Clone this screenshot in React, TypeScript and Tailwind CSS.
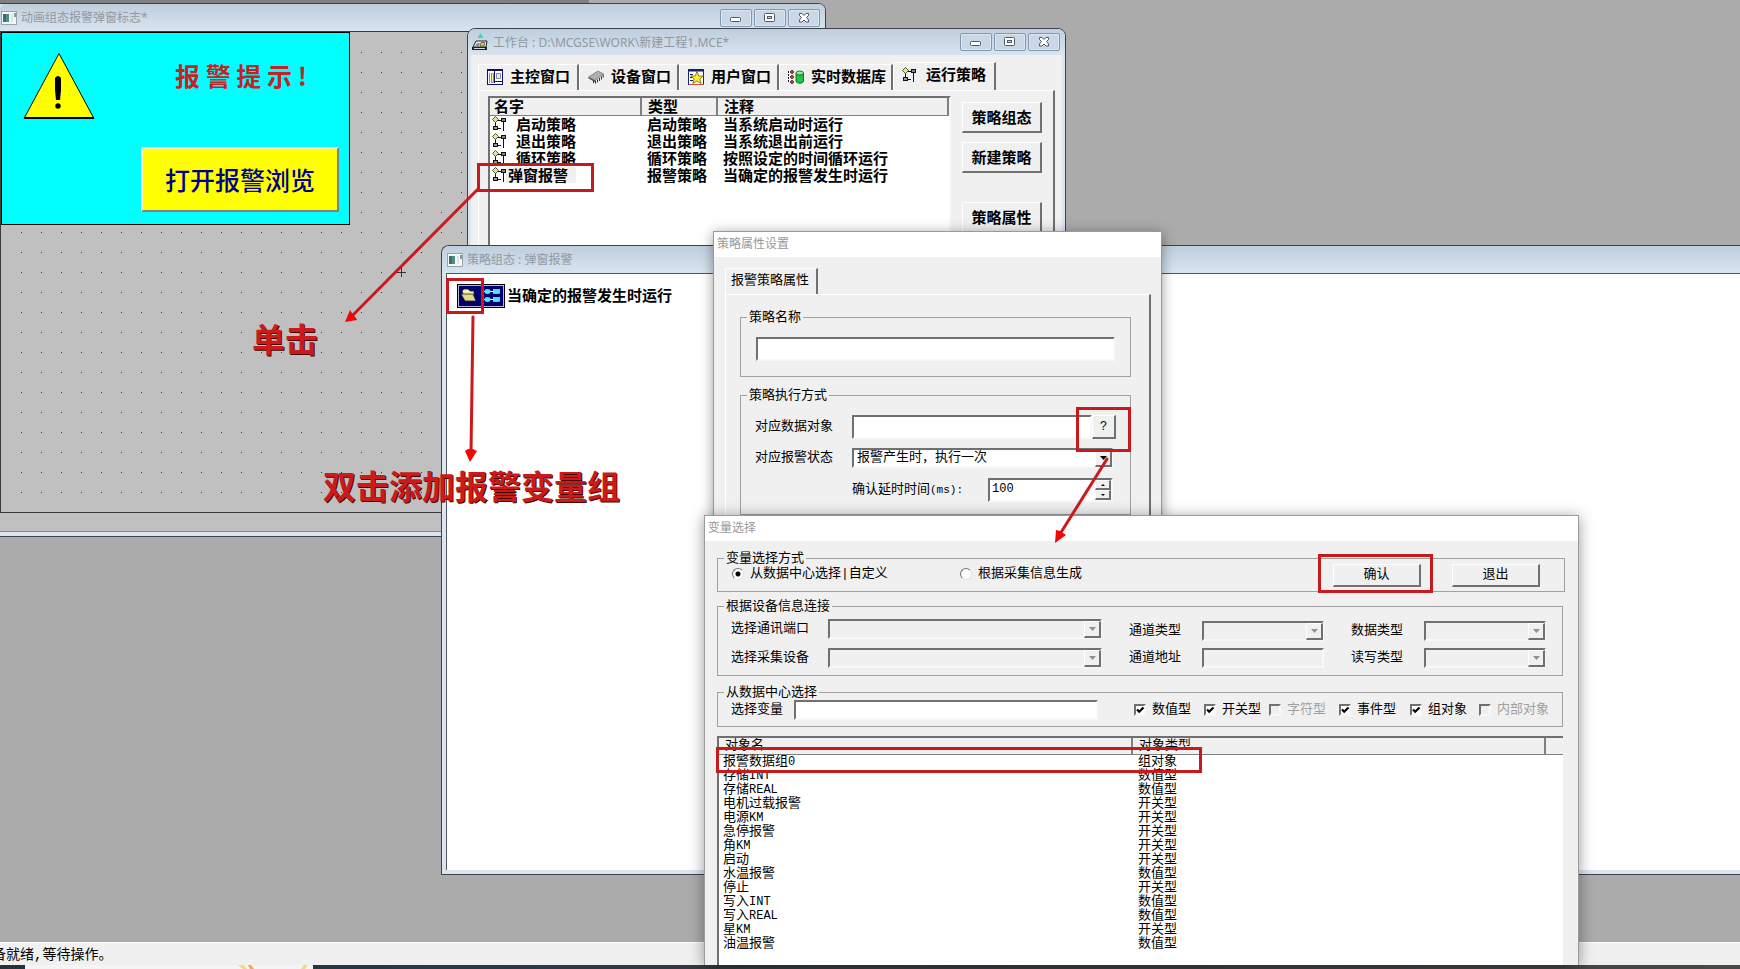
import type { ReactNode } from "react";

/* Classic Win32 bevels, shared by all the dialogs. */
const SUNKEN =
  "border-2 border-t-[#707070] border-l-[#707070] border-r-[#f8f8f8] border-b-[#f8f8f8] outline-none";
const RAISED =
  "border-t border-l border-r-2 border-b-2 border-t-white border-l-white border-r-[#707070] border-b-[#707070] bg-[#f0f0f0]";
const SONG = "font-['Liberation_Mono','Noto_Sans_CJK_SC',sans-serif]";

const STRATEGIES = [
  { name: "启动策略", kind: "启动策略", note: "当系统启动时运行", selected: false },
  { name: "退出策略", kind: "退出策略", note: "当系统退出前运行", selected: false },
  { name: "循环策略", kind: "循环策略", note: "按照设定的时间循环运行", selected: false },
  { name: "弹窗报警", kind: "报警策略", note: "当确定的报警发生时运行", selected: true },
];

const VARIABLES = [
  { name: "报警数据组", suffix: "0", kind: "组对象" },
  { name: "存储", suffix: "INT", kind: "数值型" },
  { name: "存储", suffix: "REAL", kind: "数值型" },
  { name: "电机过载报警", suffix: "", kind: "开关型" },
  { name: "电源", suffix: "KM", kind: "开关型" },
  { name: "急停报警", suffix: "", kind: "开关型" },
  { name: "角", suffix: "KM", kind: "开关型" },
  { name: "启动", suffix: "", kind: "开关型" },
  { name: "水温报警", suffix: "", kind: "数值型" },
  { name: "停止", suffix: "", kind: "开关型" },
  { name: "写入", suffix: "INT", kind: "数值型" },
  { name: "写入", suffix: "REAL", kind: "数值型" },
  { name: "星", suffix: "KM", kind: "开关型" },
  { name: "油温报警", suffix: "", kind: "数值型" },
];

function FormIcon() {
  return (
    <svg width={16} height={14} viewBox="0 0 16 14" className="shrink-0">
      <rect x={0.5} y={0.5} width={15} height={13} fill="#f4f6f8" stroke="#98a2ac" />
      <rect x={2} y={3} width={6} height={8} fill="#4f8f7c" />
      <rect x={2} y={3} width={3} height={8} fill="#3b6f78" />
      <rect x={10} y={3} width={2} height={8} fill="#dfe3e6" />
      <rect x={13} y={2} width={2} height={4} fill="#6fa592" />
    </svg>
  );
}

function WorkbenchIcon() {
  return (
    <svg width={17} height={18} viewBox="0 0 17 18" className="shrink-0">
      <path d="M8.5 0l3 5h-6z" fill="#3fd6c4" />
      <path d="M4 8h11l-1 6H1z" fill="#f4f4e0" stroke="#222" />
      <path d="M5 10h3l-1 3H3z" fill="#8a90a0" />
      <path d="M9 9.500h4l-1 3.500H8z" fill="#d8cf30" stroke="#333" strokeWidth={0.6} />
      <path d="M0 14h15v3H0z" fill="#222" />
      <path d="M2 15.500h11" stroke="#d8d8d8" />
    </svg>
  );
}

function StrategyIcon() {
  return (
    <svg width={14} height={15} viewBox="0 0 14 15" className="shrink-0">
      <path d="M5 4.500h5M3.500 6v5M5 12.500h4M11.500 6v9" fill="none" stroke="#111" />
      <path d="M3.500 0.500l3 3-3 3-3-3z" fill="#e9e68a" stroke="#4a4a20" strokeWidth={0.9} />
      <rect x={9.5} y={2.5} width={4} height={3} fill="#888" stroke="#111" />
      <rect x={1.5} y={10.5} width={4} height={3} fill="#999" stroke="#111" />
    </svg>
  );
}

function MainWindowIcon() {
  return (
    <svg width={16} height={16} viewBox="0 0 16 16" className="shrink-0">
      <rect x={0.5} y={0.5} width={15} height={15} fill="#fff" stroke="#10106a" />
      <path d="M1 1.500h14" stroke="#10106a" />
      <path d="M2.500 4v10M4.500 4.500h2v9h-2zM9.500 4.500h4v5h-4z" fill="#f3efb0" stroke="#8088c8" />
      <path d="M7.500 2v12M8 12.500h7" stroke="#10106a" />
    </svg>
  );
}

function ChipIcon() {
  return (
    <svg width={16} height={14} viewBox="0 0 16 14" className="shrink-0">
      <path d="M0.500 7L10 1l5.500 3L7 10.500z" fill="#b0b0b0" stroke="#777" strokeWidth={0.8} />
      <path d="M0.500 7L7 10.500v1.500L0.500 8.500z" fill="#555" />
      <path d="M5.500 10v3M7.500 10.500v3M9.500 9.500v3M11.500 8v3M13.500 6.500v3M15.200 4.500v3" stroke="#333" />
    </svg>
  );
}

function UserWindowIcon() {
  return (
    <svg width={16} height={16} viewBox="0 0 16 16" className="shrink-0">
      <rect x={0.5} y={0.5} width={15} height={15} fill="#fff" stroke="#1a237e" />
      <path d="M0 1.500h16" stroke="#10206a" strokeWidth={2} />
      <path d="M1 15.500h15" stroke="#d04a3a" />
      <path d="M2 5.500h3M2 8.500h3M2 11.500h3" stroke="#10206a" />
      <path
        d="M9 2.500l1.800 4.500h4.700l-3.700 3 1.400 4.500L9 12l-4.200 2.500 1.400-4.500-3.700-3h4.700z"
        fill="#ffee22"
        stroke="#5a4a00"
        strokeWidth={0.7}
      />
    </svg>
  );
}

function DatabaseIcon() {
  return (
    <svg width={16} height={16} viewBox="0 0 16 16" className="shrink-0">
      <path d="M0.500 2v12" stroke="#222" strokeDasharray="2 1" />
      <path d="M4 1l2 2-2 2-2-2zM4 6l2 2-2 2-2-2zM4 11l2 2-2 2-2-2z" fill="#b83a4a" stroke="#222" strokeWidth={0.7} />
      <path d="M8 4v8c0 3 7.500 3 7.500 0V4" fill="#25c43a" stroke="#0b4a14" strokeWidth={0.8} />
      <ellipse cx={11.75} cy={4} rx={3.75} ry={2} fill="#8df09a" stroke="#0b4a14" strokeWidth={0.8} />
    </svg>
  );
}

function CaptionButtons() {
  const button =
    "flex h-[18px] w-8 items-center justify-center rounded-xs border border-[#8497b0] bg-[#c9d7e6] shadow-[inset_0_0_0_1px_#dce6f0]";
  return (
    <div className="flex gap-0.5">
      <button type="button" aria-label="最小化" className={button}>
        <svg width={12} height={12} viewBox="0 0 12 12">
          <rect x={0.5} y={5.5} width={10} height={4} rx={1} fill="#fff" stroke="#535963" />
        </svg>
      </button>
      <button type="button" aria-label="最大化" className={button}>
        <svg width={12} height={12} viewBox="0 0 12 12">
          <rect x={0.5} y={1.5} width={10} height={8} rx={1} fill="#fff" stroke="#535963" />
          <rect x={3.5} y={4.5} width={4} height={2} fill="#c9d7e6" stroke="#535963" />
        </svg>
      </button>
      <button type="button" aria-label="关闭" className={button}>
        <svg width={12} height={12} viewBox="0 0 12 12">
          <path
            d="M1.500 1.500h2.500L6 3.500l2-2h2.500v2L8.500 5.500l2 2.500v2H8L6 8l-2 2H1.500V8l2-2.500-2-2z"
            fill="#fff"
            stroke="#535963"
          />
        </svg>
      </button>
    </div>
  );
}

function TitleBar({ icon, title, className }: { icon: ReactNode; title: string; className: string }) {
  return (
    <div className={`flex shrink-0 items-center rounded-t-md bg-linear-to-b from-[#bfcedd] to-[#d8e4f0] ${className}`}>
      {icon}
      <h2 className="flex-1 pt-px pl-1 font-['Noto_Sans','Noto_Sans_CJK_SC',sans-serif] text-xs whitespace-nowrap text-[#9298a0]">
        {title}
      </h2>
      <CaptionButtons />
    </div>
  );
}

function DialogTitle({ title }: { title: string }) {
  return (
    <h2 className="h-[25px] bg-white pl-[3px] font-['Noto_Sans','Noto_Sans_CJK_SC',sans-serif] text-xs leading-6 text-[#999]">
      {title}
    </h2>
  );
}

function Group({ title, className, children }: { title: string; className: string; children?: ReactNode }) {
  return (
    <fieldset className={`min-w-0 border border-[#a0a0a0] ${className}`}>
      <legend className="ml-1.5 h-3 bg-[#f0f0f0] px-0.5 leading-[14px]">{title}</legend>
      {children}
    </fieldset>
  );
}

function Combo({ id, value, disabled, className }: { id: string; value?: string; disabled?: boolean; className: string }) {
  return (
    <div className={`relative h-5 ${className}`}>
      <select
        id={id}
        disabled={disabled}
        className={`block h-full w-full appearance-none pl-[3px] leading-4 ${SUNKEN} ${disabled ? "bg-[#f0f0f0]" : "bg-white"}`}
      >
        <option>{value}</option>
      </select>
      <span
        className={`pointer-events-none absolute top-0.5 right-px bottom-px flex w-[17px] items-center justify-center ${RAISED}`}
      >
        <svg width={7} height={4} viewBox="0 0 7 4">
          <path d="M0 0h7L3.500 4z" fill={disabled ? "#909090" : "#000"} />
        </svg>
      </span>
    </div>
  );
}

function Check({ label, checked, className }: { label: string; checked?: boolean; className: string }) {
  return (
    <label className={`flex items-center gap-1.5 ${checked ? "text-black" : "text-[#a0a0a0]"} ${className}`}>
      <span className="grid">
        <input
          type="checkbox"
          defaultChecked={checked}
          disabled={!checked}
          className={`size-3 appearance-none [grid-area:1/1] ${SUNKEN} ${checked ? "bg-white" : "bg-[#f0f0f0]"}`}
        />
        {checked && (
          <svg width={12} height={12} viewBox="0 0 12 12" className="pointer-events-none [grid-area:1/1]">
            <path d="M3 5.500l2.200 2.300L9.500 3.500" fill="none" stroke="#000" strokeWidth={2.2} />
          </svg>
        )}
      </span>
      {label}
    </label>
  );
}

function Radio({ label, checked, className }: { label: string; checked?: boolean; className: string }) {
  return (
    <label className={`flex h-5 items-center gap-1.5 ${className}`}>
      <input
        type="radio"
        name="mode"
        defaultChecked={checked}
        className="size-3 appearance-none rounded-full border border-t-[#707070] border-r-[#e4e4e4] border-b-[#e4e4e4] border-l-[#707070] bg-white checked:bg-[radial-gradient(#000_2px,#fff_3px)]"
      />
      {label}
    </label>
  );
}

function AnimationWindow() {
  return (
    <section className="absolute top-[3px] left-0 flex h-[534px] w-[826px] flex-col rounded-tr-lg border border-l-0 border-[#3c434d] bg-[#dbe5f0]">
      <TitleBar icon={<FormIcon />} title="动画组态报警弹窗标志*" className="h-[27px] pr-[5px] pl-px" />
      <div className="relative h-[482px] border border-[#3a3a3a] bg-[#c0c0c0]">
        <svg className="absolute inset-0 size-full">
          <pattern id="grid" width={20} height={20} patternUnits="userSpaceOnUse">
            <rect x={0} y={0} width={1} height={1} fill="#333" />
          </pattern>
          <rect x={1} y={1} width="100%" height="100%" fill="url(#grid)" />
          <path d="M395 240.500h10M400.500 235v10" stroke="#333" />
        </svg>
        <div className="absolute top-0 left-0 h-[193px] w-[349px] border border-black bg-[#00ffff]">
          <svg width={72} height={68} viewBox="0 0 72 68" className="absolute top-[19px] left-[21px]">
            <path d="M36 1.500L71 66.500H1z" fill="#ff0" stroke="#000" />
            <path d="M1 66h70" stroke="#000" strokeWidth={2} />
            <path d="M32 26q3-4 6 0v12l-1 10h-4l-1-10z" fill="#000" />
            <circle cx={35} cy={54} r={2.7} fill="#000" />
          </svg>
          <p className="absolute top-[26px] left-[173px] font-['Noto_Sans_CJK_SC',sans-serif] text-[25px] leading-8 font-bold whitespace-nowrap text-[#c02424]">
            报 警 提 示 !
          </p>
          <button
            type="button"
            className="absolute top-[114px] left-[139px] h-[65px] w-[198px] border-2 border-t-[#fff8c0] border-r-[#808080] border-b-[#808080] border-l-[#fff8c0] bg-[#ffff00] font-['Noto_Sans_CJK_SC',sans-serif] text-[25px] font-medium text-[#000090]"
          >
            打开报警浏览
          </button>
        </div>
      </div>
      <div className="h-[19px] border-b border-[#8a8a8a] bg-[#c0c0c0]" />
    </section>
  );
}

function WorkbenchWindow() {
  const tabs = [
    { label: "主控窗口", icon: <MainWindowIcon />, width: "w-[101px]" },
    { label: "设备窗口", icon: <ChipIcon />, width: "w-[100px]" },
    { label: "用户窗口", icon: <UserWindowIcon />, width: "w-[100px]" },
    { label: "实时数据库", icon: <DatabaseIcon />, width: "w-[114px]" },
  ];
  return (
    <section className="absolute top-7 left-[467px] flex h-[226px] w-[599px] flex-col overflow-hidden rounded-t-lg border border-[#3c434d] bg-[#dbe5f0]">
      <TitleBar icon={<WorkbenchIcon />} title="工作台 : D:\MCGSE\WORK\新建工程1.MCE*" className="h-[26px] pr-[5px] pl-1" />
      <div className="mx-[3px] flex flex-1 flex-col bg-[#f0f0f0] px-[7px] pt-[7px] font-['Noto_Sans_CJK_SC',sans-serif] text-[15px] font-bold text-black">
        <div role="tablist" className="flex h-7 items-end">
          {tabs.map((tab) => (
            <button
              key={tab.label}
              type="button"
              role="tab"
              className={`flex h-[26px] items-center gap-[7px] border-t border-r-2 border-l border-t-white border-r-[#707070] border-l-white pb-0.5 pl-2 ${tab.width}`}
            >
              {tab.icon}
              {tab.label}
            </button>
          ))}
          <button
            type="button"
            role="tab"
            aria-selected
            className="flex h-7 w-[103px] items-center gap-2.5 border-t border-r-2 border-l border-t-white border-r-[#707070] border-l-white pb-1 pl-2"
          >
            <StrategyIcon />
            运行策略
          </button>
        </div>
        <div className="flex flex-1 items-stretch gap-[11px] border-t border-r-2 border-l border-t-white border-r-[#707070] border-l-white pt-[5px] pr-[11px] pl-[9px]">
          <div className={`flex-1 bg-white ${SUNKEN}`}>
            <table className="w-full table-fixed border-collapse text-left leading-4">
              <colgroup>
                <col className="w-[151px]" />
                <col className="w-[76px]" />
                <col />
              </colgroup>
              <thead>
                <tr className="h-[17px] bg-[#f0f0f0]">
                  <th className="border-r-2 border-b border-[#808080] p-0 pl-1">名字</th>
                  <th className="border-r-2 border-b border-[#808080] p-0 pl-1.5">类型</th>
                  <th className="border-r-2 border-b border-[#808080] p-0 pl-1.5">注释</th>
                </tr>
              </thead>
              <tbody>
                {STRATEGIES.map((s) => (
                  <tr key={s.name} className="h-[17px]">
                    <td className="p-0 pl-0.5">
                      <span className="flex items-center">
                        <StrategyIcon />
                        <span className={s.selected ? "bg-[#f0f0f0] pr-2 pl-0.5" : "ml-2.5"}>{s.name}</span>
                      </span>
                    </td>
                    <td className="p-0 pl-1.5">{s.kind}</td>
                    <td className="p-0 pl-1.5">{s.note}</td>
                  </tr>
                ))}
              </tbody>
            </table>
          </div>
          <div className="flex w-20 flex-col gap-[9px] pt-1.5">
            <button type="button" className={`h-[31px] shrink-0 ${RAISED}`}>策略组态</button>
            <button type="button" className={`h-[31px] shrink-0 ${RAISED}`}>新建策略</button>
            <button type="button" className={`mt-5 h-[31px] shrink-0 ${RAISED}`}>策略属性</button>
          </div>
        </div>
      </div>
    </section>
  );
}

function StrategyWindow() {
  return (
    <section className="absolute top-[245px] right-0 left-[441px] flex h-[630px] flex-col rounded-tl-lg border border-r-0 border-[#3c434d] bg-[#dbe5f0] pb-1 pl-1">
      <div className="-ml-1 flex h-[27px] shrink-0 items-center rounded-tl-lg bg-linear-to-b from-[#bfcedd] to-[#d8e4f0] pl-[5px]">
        <FormIcon />
        <h2 className="pt-px pl-1 font-['Noto_Sans','Noto_Sans_CJK_SC',sans-serif] text-xs text-[#9298a0]">策略组态 : 弹窗报警</h2>
      </div>
      <div className="flex flex-1 items-start border-t border-l border-[#50565e] bg-white pt-[10px] pl-2.5">
        <svg width={48} height={24} viewBox="0 0 48 24">
          <rect width={48} height={24} fill="#000" />
          <rect x={1.5} y={1.5} width={45} height={21} fill="#000070" stroke="#b8b8d0" />
          <path d="M24.500 2v20" stroke="#b8b8d0" />
          <path d="M5 7l2-2h4l2 2h4v9H8z" fill="#f3f0b4" stroke="#222" strokeWidth={0.8} />
          <path d="M4 10h12l3 7H8z" fill="#e2dc8a" stroke="#222" strokeWidth={0.8} />
          <path d="M27 7.500h15M27 15.500h15" stroke="#fff" />
          <ellipse cx={30.5} cy={7.5} rx={3} ry={2.5} fill="#58e0f0" />
          <ellipse cx={30.5} cy={15.5} rx={3} ry={2.5} fill="#58e0f0" />
          <rect x={36.5} y={5.5} width={6} height={4} fill="#58e0f0" stroke="#a8f4ff" strokeWidth={0.6} />
          <rect x={36.5} y={13.5} width={6} height={4} fill="#58e0f0" stroke="#a8f4ff" strokeWidth={0.6} />
        </svg>
        <p className="pl-0.5 font-['Noto_Sans_CJK_SC',sans-serif] text-[15px] leading-[22px] font-bold">当确定的报警发生时运行</p>
      </div>
    </section>
  );
}

function PropertiesDialog() {
  return (
    <section
      className={`absolute top-[231px] left-[713px] h-[300px] w-[449px] border border-[#9a9a9a] bg-[#f0f0f0] text-[13px] shadow-[0_2px_12px_rgba(0,0,0,0.4)] ${SONG}`}
    >
      <DialogTitle title="策略属性设置" />
      <div className="pt-[11px] pr-2.5 pl-[11px]">
        <button
          type="button"
          role="tab"
          aria-selected
          className="block h-[26px] w-[93px] border-t border-r-2 border-l border-t-white border-r-[#707070] border-l-white pr-0.5 pb-0.5"
        >
          报警策略属性
        </button>
        <div className="h-60 border-t border-r-2 border-l border-t-white border-r-[#707070] border-l-white pt-4 pr-[18px] pl-3.5">
          <Group title="策略名称" className="h-[66px]">
            <div className="px-[15px] pt-3.5">
              <input aria-label="策略名称" className={`block h-6 w-full bg-white ${SUNKEN}`} />
            </div>
          </Group>
          <Group title="策略执行方式" className="mt-3 h-[126px]">
            <div className="pt-3.5 pl-3.5">
              <div className="flex items-center">
                <label htmlFor="target" className="w-[97px]">对应数据对象</label>
                <input id="target" className={`h-6 w-[240px] bg-white ${SUNKEN}`} />
                <button type="button" className={`h-6 w-6 text-xs ${RAISED}`}>?</button>
              </div>
              <div className="mt-[9px] flex items-center">
                <label htmlFor="state" className="w-[97px]">对应报警状态</label>
                <Combo id="state" value="报警产生时，执行一次" className="w-[261px]" />
              </div>
              <div className="mt-2.5 flex items-center pl-[97px]">
                <label htmlFor="delay" className="w-[136px]">
                  确认延时时间<span className="text-[11px]">(ms):</span>
                </label>
                <div className={`flex h-6 w-[125px] bg-white ${SUNKEN}`}>
                  <input id="delay" defaultValue="100" className="min-w-0 flex-1 pb-0.5 pl-0.5 text-xs outline-none" />
                  <div className="flex w-4 flex-col">
                    <button type="button" aria-label="增加" className={`flex flex-1 items-center justify-center ${RAISED}`}>
                      <svg width={4} height={2}><path d="M2 0l2 2H0z" /></svg>
                    </button>
                    <button type="button" aria-label="减少" className={`flex flex-1 items-center justify-center ${RAISED}`}>
                      <svg width={4} height={2}><path d="M2 2l2-2H0z" /></svg>
                    </button>
                  </div>
                </div>
              </div>
            </div>
          </Group>
        </div>
      </div>
    </section>
  );
}

function VariableDialog() {
  return (
    <section
      className={`absolute top-[515px] bottom-1 left-[704px] flex w-[875px] flex-col overflow-hidden border border-b-0 border-[#9a9a9a] bg-[#f0f0f0] pr-[15px] pl-3 text-[13px] shadow-[0_2px_14px_rgba(0,0,0,0.4)] ${SONG}`}
    >
      <div className="-mr-[15px] -ml-3 shrink-0">
        <DialogTitle title="变量选择" />
      </div>
      <Group title="变量选择方式" className="mt-[11px] -mr-0.5 h-10 shrink-0">
        <div className="flex">
          <Radio label="从数据中心选择|自定义" checked className="w-[228px] pl-3.5" />
          <Radio label="根据采集信息生成" className="flex-1 pl-3.5" />
          <button type="button" className={`h-[23px] w-[88px] ${RAISED}`}>确认</button>
          <button type="button" className={`mr-6 ml-[31px] h-[23px] w-[88px] ${RAISED}`}>退出</button>
        </div>
      </Group>
      <Group title="根据设备信息连接" className="mt-2 h-[76px] shrink-0">
        <div className="flex items-start pt-[7px] pl-[13px]">
          <div className="flex flex-col gap-[9px]">
            <div className="flex items-center">
              <label htmlFor="port" className="w-[97px]">选择通讯端口</label>
              <Combo id="port" disabled className="w-[274px]" />
            </div>
            <div className="flex items-center">
              <label htmlFor="device" className="w-[97px]">选择采集设备</label>
              <Combo id="device" disabled className="w-[274px]" />
            </div>
          </div>
          <div className="ml-[27px] flex flex-col gap-[7px] pt-0.5">
            <div className="flex items-center">
              <label htmlFor="channel" className="w-[73px]">通道类型</label>
              <Combo id="channel" disabled className="w-[122px]" />
            </div>
            <div className="flex items-center">
              <label htmlFor="address" className="w-[73px]">通道地址</label>
              <input id="address" disabled className={`h-5 w-[122px] bg-[#f0f0f0] ${SUNKEN}`} />
            </div>
          </div>
          <div className="ml-[27px] flex flex-col gap-[7px] pt-0.5">
            <div className="flex items-center">
              <label htmlFor="datatype" className="w-[73px]">数据类型</label>
              <Combo id="datatype" disabled className="w-[122px]" />
            </div>
            <div className="flex items-center">
              <label htmlFor="access" className="w-[73px]">读写类型</label>
              <Combo id="access" disabled className="w-[122px]" />
            </div>
          </div>
        </div>
      </Group>
      <Group title="从数据中心选择" className="mt-2.5 h-[41px] shrink-0">
        <div className="flex items-center pt-0.5 pl-[13px]">
          <label htmlFor="variable" className="w-[63px]">选择变量</label>
          <input id="variable" className={`h-5 w-[304px] bg-white ${SUNKEN}`} />
          <Check label="数值型" checked className="ml-9 w-[70px]" />
          <Check label="开关型" checked className="w-[65px]" />
          <Check label="字符型" className="w-[70px]" />
          <Check label="事件型" checked className="w-[71px]" />
          <Check label="组对象" checked className="w-[69px]" />
          <Check label="内部对象" className="" />
        </div>
      </Group>
      <div className="mt-[9px] flex-1 border-t-2 border-l-2 border-[#707070] bg-white">
        <table className="w-full table-fixed border-collapse text-left leading-[14px]">
          <colgroup>
            <col className="w-[413px]" />
            <col className="w-[413px]" />
            <col />
          </colgroup>
          <thead>
            <tr className="h-4 bg-[#f0f0f0]">
              <th className="border-r-2 border-b border-[#808080] p-0 pl-1.5 font-normal">对象名</th>
              <th className="border-r-2 border-b border-[#808080] p-0 pl-1.5 font-normal">对象类型</th>
              <th className="border-b border-[#808080] p-0" />
            </tr>
          </thead>
          <tbody>
            {VARIABLES.map((v) => (
              <tr key={v.name + v.suffix} className="h-3.5">
                <td className="p-0 pl-1">
                  {v.name}
                  <span className="text-xs leading-[14px]">{v.suffix}</span>
                </td>
                <td className="p-0 pl-1.5">{v.kind}</td>
                <td className="p-0" />
              </tr>
            ))}
          </tbody>
        </table>
      </div>
    </section>
  );
}

/* Tutorial markup drawn over the windows. */
function Annotations() {
  const note =
    "absolute font-['Noto_Sans_CJK_SC',sans-serif] text-[33px] leading-10 font-bold whitespace-nowrap text-[#cc1a1a] [text-shadow:1px_1px_0_#400]";
  return (
    <div className="pointer-events-none absolute inset-0">
      <div className="absolute top-[163px] left-[477px] h-[29px] w-[117px] border-3 border-[#c8191c]" />
      <div className="absolute top-[278px] left-[446px] h-[36px] w-[38px] border-3 border-[#c8191c]" />
      <div className="absolute top-[407px] left-[1076px] h-[45px] w-[55px] border-3 border-[#c8191c]" />
      <div className="absolute top-[554px] left-[1318px] h-[39px] w-[115px] border-3 border-[#c8191c]" />
      <div className="absolute top-[747px] left-[716px] h-[26px] w-[486px] border-3 border-[#c8191c]" />
      <svg className="absolute inset-0 size-full">
        <path
          d="M478 189L352 316M473 317L471 452M1107 459L1060 534"
          fill="none"
          stroke="#cc1a1c"
          strokeWidth={3}
          strokeLinecap="round"
        />
        <path d="M345 322l5-12 2 3 4 5 1 2zM470 462l-5-11 3-2h5l4 2zM1055 543l1-13 4 1 6 4z" fill="#f00808" />
      </svg>
      <p className={`top-[318px] left-[252px] ${note}`}>单击</p>
      <p className={`top-[465px] left-[323px] ${note}`}>双击添加报警变量组</p>
    </div>
  );
}

export default function App() {
  return (
    <div className="relative flex h-screen flex-col overflow-hidden bg-[#ababab] text-black">
      <div className="h-[3px] w-[589px] bg-[#808080]" />
      <main className="flex-1">
        <AnimationWindow />
        <WorkbenchWindow />
        <StrategyWindow />
      </main>
      <footer className="h-[23px] border-t border-white bg-[#f0f0f0]">
        <p className="-ml-2 font-['Liberation_Mono','Noto_Sans_CJK_SC',sans-serif] text-sm leading-6">备就绪,等待操作。</p>
      </footer>
      <div className="flex h-1 bg-linear-to-r from-[#22323f] to-[#484848] pl-[25px]">
        <div className="w-72 bg-[#f4f4f4]">
          <svg width={288} height={4} viewBox="0 0 288 4">
            <path d="M213 0h5l4 4h-4zM276 4l3-4h4l-3 4z" fill="#f8d878" />
            <path d="M223 0h3l3 4h-4z" fill="#f6a94e" />
          </svg>
        </div>
      </div>
      <PropertiesDialog />
      <VariableDialog />
      <Annotations />
    </div>
  );
}
